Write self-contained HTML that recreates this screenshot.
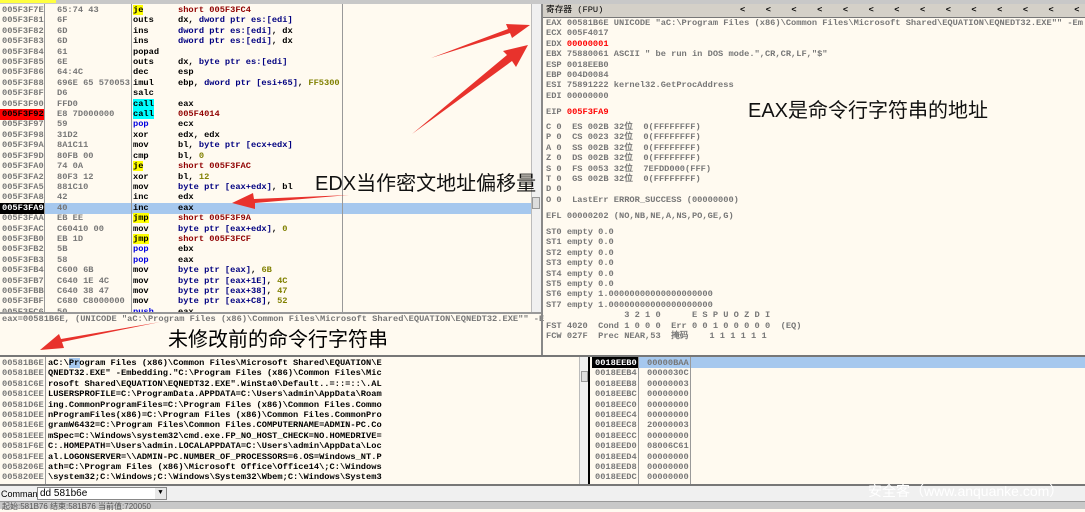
<!DOCTYPE html>
<html><head><meta charset="utf-8"><style>
*{margin:0;padding:0;box-sizing:border-box}
body{width:1085px;height:509px;overflow:hidden;background:#fffaf0;position:relative;font-family:"Liberation Mono",monospace;font-size:8.7px;color:#000}
.a{position:absolute;white-space:pre;line-height:10.4px;font-weight:bold}
.g{color:#777}
.r{color:#900000}
.n{color:#000080}
.o{color:#808000}
.b{color:#0000e0}
.y{background:#ffff00}
.c{background:#00ffff}
.vl{position:absolute;width:1px;background:#999}
.cn{font-family:"Liberation Sans","Noto Sans CJK SC",sans-serif;font-weight:normal;position:absolute;white-space:nowrap}
</style></head><body>
<div style="position:absolute;left:0;top:0;width:1085px;height:4px;background:#c8c8c8"></div>
<div style="position:absolute;left:0;top:0;width:56px;height:3px;background:#ffff40"></div>
<div style="position:absolute;left:0;top:203px;width:531px;height:10.5px;background:#a6c8ee"></div>
<div style="position:absolute;left:0;top:109px;width:44px;height:10.5px;background:#ff0000"></div>
<div style="position:absolute;left:0;top:203px;width:44px;height:10.5px;background:#000"></div>
<div class="vl" style="left:44px;top:4px;height:308px"></div>
<div class="vl" style="left:131px;top:4px;height:308px"></div>
<div class="vl" style="left:342px;top:4px;height:308px"></div>
<div style="position:absolute;left:531px;top:4px;width:10px;height:308px;background:#f0f0f0;border-left:1px solid #bbb"></div>
<div style="position:absolute;left:532px;top:197px;width:8px;height:12px;background:#ddd;border:1px solid #999"></div>
<div class="a g" style="left:2px;top:5px">005F3F7E
005F3F81
005F3F82
005F3F83
005F3F84
005F3F85
005F3F86
005F3F88
005F3F8F
005F3F90
<span style="color:#000">005F3F92</span>
005F3F97
005F3F98
005F3F9A
005F3F9D
005F3FA0
005F3FA2
005F3FA5
005F3FA8
<span style="color:#fff">005F3FA9</span>
005F3FAA
005F3FAC
005F3FB0
005F3FB2
005F3FB3
005F3FB4
005F3FB7
005F3FBB
005F3FBF
005F3FC6</div>
<div class="a g" style="left:57px;top:5px">65:74 43
6F
6D
6D
61
6E
64:4C
696E 65 570053
D6
FFD0
E8 7D000000
59
31D2
8A1C11
80FB 00
74 0A
80F3 12
881C10
42
40
EB EE
C60410 00
EB 1D
5B
58
C600 6B
C640 1E 4C
C640 38 47
C680 C8000000
50</div>
<div class="a" style="left:133px;top:5px"><span class="y">je</span>
outs
ins
ins
popad
outs
dec
imul
salc
<span class="c">call</span>
<span class="c">call</span>
<span class="b">pop</span>
xor
mov
cmp
<span class="y">je</span>
xor
mov
inc
inc
<span class="y">jmp</span>
mov
<span class="y">jmp</span>
<span class="b">pop</span>
<span class="b">pop</span>
mov
mov
mov
mov
<span class="b">push</span></div>
<div class="a" style="left:178px;top:5px"><span class="r">short 005F3FC4</span>
dx, <span class="n">dword ptr es:[edi]</span>
<span class="n">dword ptr es:[edi]</span>, dx
<span class="n">dword ptr es:[edi]</span>, dx

dx, <span class="n">byte ptr es:[edi]</span>
esp
ebp, <span class="n">dword ptr [esi+65]</span>, <span class="o">FF5300</span>

eax
<span class="r">005F4014</span>
ecx
edx, edx
bl, <span class="n">byte ptr [ecx+edx]</span>
bl, <span class="o">0</span>
<span class="r">short 005F3FAC</span>
bl, <span class="o">12</span>
<span class="n">byte ptr [eax+edx]</span>, bl
edx
eax
<span class="r">short 005F3F9A</span>
<span class="n">byte ptr [eax+edx]</span>, <span class="o">0</span>
<span class="r">short 005F3FCF</span>
ebx
eax
<span class="n">byte ptr [eax]</span>, <span class="o">6B</span>
<span class="n">byte ptr [eax+1E]</span>, <span class="o">4C</span>
<span class="n">byte ptr [eax+38]</span>, <span class="o">47</span>
<span class="n">byte ptr [eax+C8]</span>, <span class="o">52</span>
eax</div>
<div style="position:absolute;left:0;top:312px;width:541px;height:44px;background:#fffaf0;border-top:2px solid #999"></div>
<div class="a g" style="left:2px;top:314px">eax=00581B6E, (UNICODE "aC:\Program Files (x86)\Common Files\Microsoft Shared\EQUATION\EQNEDT32.EXE"" -E</div>
<div class="cn" style="left:168px;top:323px;font-size:20px">未修改前的命令行字符串</div>
<div class="vl" style="left:541px;top:4px;height:352px;background:#888;width:2px"></div>
<div style="position:absolute;left:543px;top:4px;width:542px;height:14px;background:#d4d0c8;border-bottom:1px solid #777"></div>
<div class="a" style="left:546px;top:5px;font-weight:normal;font-family:'Liberation Mono','Noto Sans CJK SC',monospace">寄存器 (FPU)</div>
<div class="a" style="left:740px;top:5px;letter-spacing:20.5px">&lt;&lt;&lt;&lt;&lt;&lt;&lt;&lt;&lt;&lt;&lt;&lt;&lt;&lt;</div>
<div class="a g" style="left:546px;top:18px">EAX 00581B6E UNICODE "aC:\Program Files (x86)\Common Files\Microsoft Shared\EQUATION\EQNEDT32.EXE"" -Em
ECX 005F4017
EDX <span style="color:#f00">00000001</span>
EBX 75880061 ASCII " be run in DOS mode.",CR,CR,LF,"$"
ESP 0018EEB0
EBP 004D0084
ESI 75891222 kernel32.GetProcAddress
EDI 00000000</div>
<div class="a g" style="left:546px;top:107px">EIP <span style="color:#f00">005F3FA9</span></div>
<div class="a g" style="left:546px;top:122px">C 0  ES 002B 32位  0(FFFFFFFF)
P 0  CS 0023 32位  0(FFFFFFFF)
A 0  SS 002B 32位  0(FFFFFFFF)
Z 0  DS 002B 32位  0(FFFFFFFF)
S 0  FS 0053 32位  7EFDD000(FFF)
T 0  GS 002B 32位  0(FFFFFFFF)
D 0
O 0  LastErr ERROR_SUCCESS (00000000)</div>
<div class="a g" style="left:546px;top:211px">EFL 00000202 (NO,NB,NE,A,NS,PO,GE,G)</div>
<div class="a g" style="left:546px;top:227px">ST0 empty 0.0
ST1 empty 0.0
ST2 empty 0.0
ST3 empty 0.0
ST4 empty 0.0
ST5 empty 0.0
ST6 empty 1.00000000000000000000
ST7 empty 1.00000000000000000000
               3 2 1 0      E S P U O Z D I
FST 4020  Cond 1 0 0 0  Err 0 0 1 0 0 0 0 0  (EQ)
FCW 027F  Prec NEAR,53  掩码    1 1 1 1 1 1</div>
<div class="cn" style="left:748px;top:94px;font-size:20px;color:#111">EAX是命令行字符串的地址</div>
<div class="cn" style="left:315px;top:167px;font-size:20px;color:#111">EDX当作密文地址偏移量</div>
<div style="position:absolute;left:0;top:355px;width:1085px;height:2px;background:#777"></div>
<div class="vl" style="left:45px;top:357px;height:127px"></div>
<div style="position:absolute;left:579px;top:357px;width:11px;height:127px;background:#f0f0f0;border-left:1px solid #bbb;border-right:2px solid #000"></div>
<div style="position:absolute;left:581px;top:371px;width:7px;height:11px;background:#ddd;border:1px solid #999"></div>
<div class="a g" style="left:2px;top:358px">00581B6E
00581BEE
00581C6E
00581CEE
00581D6E
00581DEE
00581E6E
00581EEE
00581F6E
00581FEE
0058206E
005820EE</div>
<div style="position:absolute;left:69px;top:358px;width:11px;height:10px;background:#a6c8ee"></div>
<div class="a" style="left:48px;top:358px">aC:\Program Files (x86)\Common Files\Microsoft Shared\EQUATION\E
QNEDT32.EXE" -Embedding."C:\Program Files (x86)\Common Files\Mic
rosoft Shared\EQUATION\EQNEDT32.EXE".WinSta0\Default..=::=::\.AL
LUSERSPROFILE=C:\ProgramData.APPDATA=C:\Users\admin\AppData\Roam
ing.CommonProgramFiles=C:\Program Files (x86)\Common Files.Commo
nProgramFiles(x86)=C:\Program Files (x86)\Common Files.CommonPro
gramW6432=C:\Program Files\Common Files.COMPUTERNAME=ADMIN-PC.Co
mSpec=C:\Windows\system32\cmd.exe.FP_NO_HOST_CHECK=NO.HOMEDRIVE=
C:.HOMEPATH=\Users\admin.LOCALAPPDATA=C:\Users\admin\AppData\Loc
al.LOGONSERVER=\\ADMIN-PC.NUMBER_OF_PROCESSORS=6.OS=Windows_NT.P
ath=C:\Program Files (x86)\Microsoft Office\Office14\;C:\Windows
\system32;C:\Windows;C:\Windows\System32\Wbem;C:\Windows\System3</div>
<div style="position:absolute;left:592px;top:357px;width:493px;height:11px;background:#a6c8ee"></div>
<div style="position:absolute;left:592px;top:357px;width:46px;height:11px;background:#000"></div>
<div class="vl" style="left:638px;top:357px;height:127px"></div>
<div class="vl" style="left:690px;top:357px;height:127px"></div>
<div class="a g" style="left:595px;top:358px"><span style="color:#fff">0018EEB0</span>
0018EEB4
0018EEB8
0018EEBC
0018EEC0
0018EEC4
0018EEC8
0018EECC
0018EED0
0018EED4
0018EED8
0018EEDC</div>
<div class="a g" style="left:647px;top:358px">00000BAA
0000030C
00000003
00000000
00000000
00000000
20000003
00000000
08006C61
00000000
00000000
00000000</div>
<div style="position:absolute;left:0;top:484px;width:1085px;height:2px;background:#777"></div>
<div style="position:absolute;left:0;top:486px;width:1085px;height:15px;background:#f0f0f0"></div>
<div class="cn" style="left:1px;top:489px;font-size:9px">Command</div>
<div style="position:absolute;left:37px;top:487px;width:130px;height:13px;background:#fff;border:1px solid #888"></div>
<div class="cn" style="left:40px;top:488px;font-size:10px">dd 581b6e</div>
<div style="position:absolute;left:155px;top:488px;width:11px;height:11px;background:#e8e8e8;font-size:7px;text-align:center;line-height:11px">▼</div>
<div class="cn" style="left:868px;top:481px;font-size:14px;color:#fff">安全客（www.anquanke.com）</div>
<div style="position:absolute;left:0;top:501px;width:1085px;height:8px;background:#c8c8c8;border-top:1px solid #999"></div>
<div class="cn" style="left:2px;top:501px;font-size:8px;color:#555">起始:581B76 结束:581B76 当前值:720050</div>
<svg style="position:absolute;left:0;top:0" width="1085" height="509">
<g fill="#e8322c">
<polygon points="431,58 508,29 506,24 530,25 512,38 510,33"/>
<polygon points="412,134 507,55 503,51 528,45 516,67 512,61"/>
<polygon points="349,195 255,203 255,209 232,203 253,193 254,199"/>
<polygon points="160,322 62,342 64,348 40,350 59,334 61,339"/>
</g>
</svg>
</body></html>
